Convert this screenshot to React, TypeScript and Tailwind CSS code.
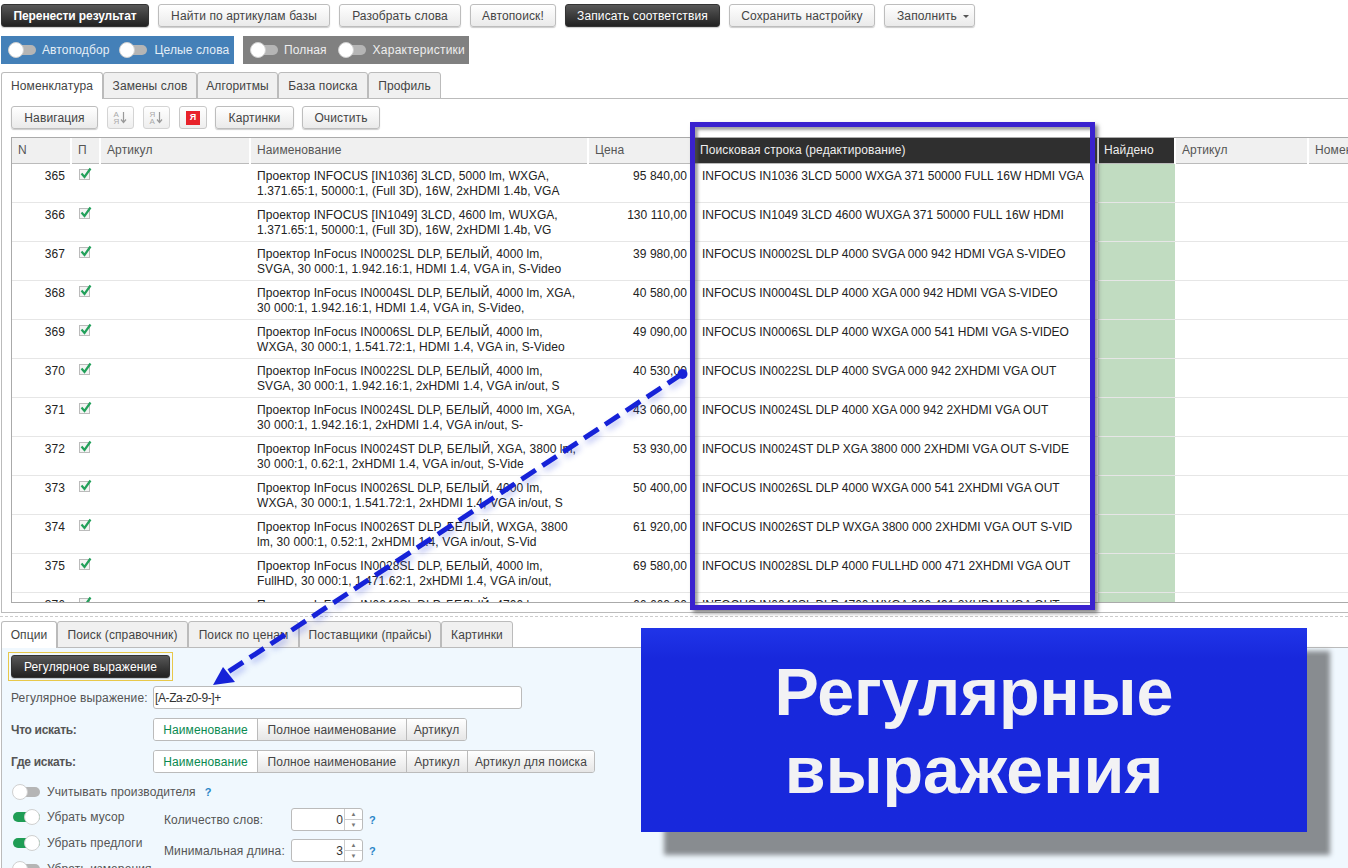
import React from "react";

const F = "[font-family:'Liberation_Sans',Arial,sans-serif]";

type BtnProps = { w: string; dark?: boolean; bold?: boolean; children: React.ReactNode };

function Btn({ w, dark, bold, children }: BtnProps) {
  return (
    <div
      className={
        w +
        " flex h-[23px] shrink-0 items-center justify-center rounded-[3px] border text-[12px] shadow-[0_1px_1px_rgba(0,0,0,0.2)] " +
        (dark
          ? "border-[#333] bg-linear-to-b from-[#585858] to-[#222] text-white "
          : "border-[#bdbdbd] bg-linear-to-b from-white to-[#eaeaea] text-[#444] ") +
        (bold ? "font-bold tracking-[-0.1px]" : "")
      }
    >
      {children}
    </div>
  );
}

function Toggle({ on }: { on?: boolean }) {
  return (
    <div className="relative h-[16px] w-[28px] shrink-0">
      <div className={"absolute left-[1px] top-[3px] h-[10px] w-[27px] rounded-full " + (on ? "bg-[#1f9d55]" : "bg-[#b5b5b5]")} />
      <div
        className={
          "absolute top-0 h-[16px] w-[16px] rounded-full border border-[#d0d0d0] bg-white " + (on ? "right-0" : "left-0")
        }
      />
    </div>
  );
}

function Tab({ w, active, children, h = "h-[27px]" }: { w: string; active?: boolean; h?: string; children: React.ReactNode }) {
  return (
    <div
      className={
        w +
        " " +
        h +
        " flex shrink-0 items-center justify-center rounded-t-[3px] border border-[#bbb] text-[12px] text-[#444] " +
        (active ? "border-b-0 bg-white" : "bg-[#f0f0f0]")
      }
    >
      {children}
    </div>
  );
}

function Sort({ flip }: { flip?: boolean }) {
  return (
    <div className="ml-[1px] flex h-[23px] w-[27px] shrink-0 items-center justify-center gap-[1px] rounded-[3px] border border-[#d4d4d4] bg-linear-to-b from-white to-[#eee]">
      <div className="flex flex-col text-[8px] leading-[7px] tracking-normal text-[#aaa]">
        <span>{flip ? "Я" : "А"}</span>
        <span>{flip ? "А" : "Я"}</span>
      </div>
      <svg width="7" height="13" viewBox="0 0 7 13" fill="none" stroke="#999" strokeWidth="1.2">
        <path d="M3.5 1V11M1 8.5l2.5 3L6 8.5" />
      </svg>
    </div>
  );
}

function Check() {
  return (
    <svg width="14" height="14" viewBox="0 0 14 14" fill="none" className="ml-[7px] mt-[3px]">
      <rect x="1.5" y="2.5" width="10" height="10" fill="#f4f4f4" stroke="#bbb" />
      <path d="M3.5 6.5l3 3.5L12.5 1.5" stroke="#22a05a" strokeWidth="2.2" />
    </svg>
  );
}

const rows: [string, string, string, string, string][] = [
  ["365", "Проектор INFOCUS [IN1036] 3LCD, 5000 lm, WXGA,", "1.371.65:1, 50000:1, (Full 3D), 16W, 2xHDMI 1.4b, VGA", "95 840,00", "INFOCUS IN1036 3LCD 5000 WXGA 371 50000 FULL 16W HDMI VGA"],
  ["366", "Проектор INFOCUS [IN1049] 3LCD, 4600 lm, WUXGA,", "1.371.65:1, 50000:1, (Full 3D), 16W, 2xHDMI 1.4b, VG", "130 110,00", "INFOCUS IN1049 3LCD 4600 WUXGA 371 50000 FULL 16W HDMI"],
  ["367", "Проектор InFocus IN0002SL DLP, БЕЛЫЙ, 4000 lm,", "SVGA, 30 000:1, 1.942.16:1, HDMI 1.4, VGA in, S-Video", "39 980,00", "INFOCUS IN0002SL DLP 4000 SVGA 000 942 HDMI VGA S-VIDEO"],
  ["368", "Проектор InFocus IN0004SL DLP, БЕЛЫЙ, 4000 lm, XGA,", "30 000:1, 1.942.16:1, HDMI 1.4, VGA in, S-Video,", "40 580,00", "INFOCUS IN0004SL DLP 4000 XGA 000 942 HDMI VGA S-VIDEO"],
  ["369", "Проектор InFocus IN0006SL DLP, БЕЛЫЙ, 4000 lm,", "WXGA, 30 000:1, 1.541.72:1, HDMI 1.4, VGA in, S-Video", "49 090,00", "INFOCUS IN0006SL DLP 4000 WXGA 000 541 HDMI VGA S-VIDEO"],
  ["370", "Проектор InFocus IN0022SL DLP, БЕЛЫЙ, 4000 lm,", "SVGA, 30 000:1, 1.942.16:1, 2xHDMI 1.4, VGA in/out, S", "40 530,00", "INFOCUS IN0022SL DLP 4000 SVGA 000 942 2XHDMI VGA OUT"],
  ["371", "Проектор InFocus IN0024SL DLP, БЕЛЫЙ, 4000 lm, XGA,", "30 000:1, 1.942.16:1, 2xHDMI 1.4, VGA in/out, S-", "43 060,00", "INFOCUS IN0024SL DLP 4000 XGA 000 942 2XHDMI VGA OUT"],
  ["372", "Проектор InFocus IN0024ST DLP, БЕЛЫЙ, XGA, 3800 lm,", "30 000:1, 0.62:1, 2xHDMI 1.4, VGA in/out, S-Vide", "53 930,00", "INFOCUS IN0024ST DLP XGA 3800 000 2XHDMI VGA OUT S-VIDE"],
  ["373", "Проектор InFocus IN0026SL DLP, БЕЛЫЙ, 4000 lm,", "WXGA, 30 000:1, 1.541.72:1, 2xHDMI 1.4, VGA in/out, S", "50 400,00", "INFOCUS IN0026SL DLP 4000 WXGA 000 541 2XHDMI VGA OUT"],
  ["374", "Проектор InFocus IN0026ST DLP, БЕЛЫЙ, WXGA, 3800", "lm, 30 000:1, 0.52:1, 2xHDMI 1.4, VGA in/out, S-Vid", "61 920,00", "INFOCUS IN0026ST DLP WXGA 3800 000 2XHDMI VGA OUT S-VID"],
  ["375", "Проектор InFocus IN0028SL DLP, БЕЛЫЙ, 4000 lm,", "FullHD, 30 000:1, 1.471.62:1, 2xHDMI 1.4, VGA in/out,", "69 580,00", "INFOCUS IN0028SL DLP 4000 FULLHD 000 471 2XHDMI VGA OUT"],
  ["376", "Проектор InFocus IN0046SL DLP, БЕЛЫЙ, 4700 lm,", "WXGA, 30 000:1, 1.541.72:1, 2xHDMI 1.4, VGA in/out, S", "66 660,00", "INFOCUS IN0046SL DLP 4700 WXGA 000 491 2XHDMI VGA OUT"],
];

const thBase = "h-[25px] border-r-2 border-r-white bg-[#f0f0f0] pl-[6px] text-left align-middle text-[12px] font-normal whitespace-nowrap text-[#555]";

function Segments({ items }: { items: [string, string][] }) {
  return (
    <div className="flex h-[23px] overflow-hidden rounded-[3px] border border-[#bbb]">
      {items.map(([t, w], i) => (
        <div
          key={t}
          className={
            w +
            " flex items-center justify-center text-[12px] " +
            (i === 0
              ? "bg-white text-[#0a8a50]"
              : "border-l border-[#bbb] bg-linear-to-b from-white to-[#e6e6e6] text-[#444]")
          }
        >
          {t}
        </div>
      ))}
    </div>
  );
}

function Spinner({ value }: { value: string }) {
  return (
    <div className="flex h-[23px] w-[72px] shrink-0 overflow-hidden rounded-[3px] border border-[#bbb] bg-white">
      <div className="flex flex-1 items-center justify-end pr-[1px] text-[12px] text-[#333]">{value}</div>
      <div className="flex w-[18px] flex-col border-l border-[#ccc] text-[#777]">
        <div className="flex flex-1 items-center justify-center border-b border-[#ccc] text-[6px] leading-none">▲</div>
        <div className="flex flex-1 items-center justify-center text-[6px] leading-none">▼</div>
      </div>
    </div>
  );
}

const Q = () => <span className="text-[11px] font-bold text-[#2a86c8]">?</span>;

export default function App() {
  return (
    <div className={F + " relative h-[868px] w-[1348px] overflow-hidden bg-white tracking-[0.12px]"}>
      {/* top toolbar */}
      <div className="flex gap-[9px] pl-[1px] pt-[4px]">
        <Btn w="w-[148px]" dark bold>Перенести результат</Btn>
        <Btn w="w-[172px]">Найти по артикулам базы</Btn>
        <Btn w="w-[122px]">Разобрать слова</Btn>
        <Btn w="w-[86px]">Автопоиск!</Btn>
        <Btn w="w-[155px]" dark>Записать соответствия</Btn>
        <Btn w="w-[146px]">Сохранить настройку</Btn>
        <Btn w="w-[91px]">
          <span className="w-[7px]" />
          Заполнить
          <span className="ml-[6px] mt-[1px] h-0 w-0 border-x-[3px] border-t-[3px] border-x-transparent border-t-[#555]" />
        </Btn>
      </div>

      {/* toggle panels */}
      <div className="mt-[9px] flex gap-[9px] pl-[1px]">
        <div className="flex h-[28px] w-[233px] items-center bg-[#4480b8] pl-[7px] text-[12px] text-[#e4eef6]">
          <Toggle />
          <span className="ml-[6px]">Автоподбор</span>
          <span className="ml-[10px]"><Toggle /></span>
          <span className="ml-[7px]">Целые слова</span>
        </div>
        <div className="flex h-[28px] w-[226px] items-center bg-[#808080] pl-[7px] text-[12px] text-[#eee]">
          <Toggle />
          <span className="ml-[6px]">Полная</span>
          <span className="ml-[11px]"><Toggle /></span>
          <span className="ml-[7px] tracking-[0.25px]">Характеристики</span>
        </div>
      </div>

      {/* main tabs */}
      <div className="relative z-10 mt-[8px] flex pl-[1px]">
        <Tab w="w-[102px]" active>Номенклатура</Tab>
        <Tab w="w-[94px]">Замены слов</Tab>
        <Tab w="w-[81px]">Алгоритмы</Tab>
        <Tab w="w-[90px]">База поиска</Tab>
        <Tab w="w-[73px]">Профиль</Tab>
      </div>

      {/* main panel */}
      <div className="ml-[1px] mt-[-1px] h-[515px] border-b border-l border-t border-[#bbb]">
        <div className="ml-[9px] mt-[7px] flex gap-[8px]">
          <Btn w="w-[87px]">Навигация</Btn>
          <Sort />
          <Sort flip />
          <div className="ml-[1px] flex h-[23px] w-[28px] items-center justify-center rounded-[3px] border border-[#c8c8c8] bg-linear-to-b from-white to-[#eee]">
            <span className="flex h-[14px] w-[14px] items-center justify-center bg-[#e8222a] text-[9px] font-bold text-white">Я</span>
          </div>
          <Btn w="w-[79px]">Картинки</Btn>
          <Btn w="w-[78px]">Очистить</Btn>
        </div>

        <div className="ml-[9px] mt-[8px] h-[466px] overflow-hidden border-y border-l border-[#aaa]">
          <table className="w-[1500px] table-fixed border-collapse">
            <colgroup>
              <col className="w-[59px]" />
              <col className="w-[29px]" />
              <col className="w-[150px]" />
              <col className="w-[338px]" />
              <col className="w-[106px]" />
              <col className="w-[404px]" />
              <col className="w-[77px]" />
              <col className="w-[133px]" />
              <col className="w-[204px]" />
            </colgroup>
            <thead>
              <tr className="border-b border-[#bbb]">
                <th className={thBase}>N</th>
                <th className={thBase}>П</th>
                <th className={thBase}>Артикул</th>
                <th className={thBase}>Наименование</th>
                <th className={thBase}>Цена</th>
                <th className="h-[25px] border-r-2 border-white bg-[#2f2f2f] pl-[5px] text-left text-[12px] font-normal text-[#eee]">Поисковая строка (редактирование)</th>
                <th className="h-[25px] border-r-2 border-white bg-[#2f2f2f] pl-[5px] text-left text-[12px] font-normal text-[#eee]">Найдено</th>
                <th className={thBase}>Артикул</th>
                <th className={thBase}>Номенклатура</th>
              </tr>
            </thead>
            <tbody>
              {rows.map((r) => (
                <tr key={r[0]} className="h-[39px] border-b border-[#e6e6e6] align-top text-[12px] leading-[15px] tracking-[0.07px] text-[#222]">
                  <td className="pr-[6px] pt-[5px] text-right">{r[0]}</td>
                  <td><Check /></td>
                  <td />
                  <td className="pl-[7px] pt-[5px] whitespace-nowrap">{r[1]}<br />{r[2]}</td>
                  <td className="pr-[7px] pt-[5px] text-right">{r[3]}</td>
                  <td className="pl-[8px] pt-[5px] tracking-[-0.01px] whitespace-nowrap">{r[4]}</td>
                  <td className="bg-[#c1dcc1]" />
                  <td />
                  <td />
                </tr>
              ))}
            </tbody>
          </table>
        </div>
      </div>

      {/* splitter */}
      <div className="mt-[3px] border-t border-dashed border-[#ccc]" />

      {/* bottom tabs */}
      <div className="relative z-10 mt-[4px] flex pl-[1px]">
        <Tab w="w-[56px]" active>Опции</Tab>
        <Tab w="w-[131px]">Поиск (справочник)</Tab>
        <Tab w="w-[111px]">Поиск по ценам</Tab>
        <Tab w="w-[142px]">Поставщики (прайсы)</Tab>
        <Tab w="w-[72px]">Картинки</Tab>
      </div>

      {/* bottom panel */}
      <div className="ml-[1px] mt-[-1px] h-[221px] border-l border-t border-[#bbb] bg-[#f0f8fe] pl-[6px] pt-[4px] text-[12px] text-[#555]">
        <div className="w-[165px] border border-[#e8c84a] p-[2px]">
          <Btn w="w-[159px]" dark>Регулярное выражение</Btn>
        </div>
        <div className="mt-[5px] flex items-center pl-[3px]">
          <span className="w-[142px]">Регулярное выражение:</span>
          <div className="flex h-[23px] w-[369px] items-center rounded-[3px] border border-[#bbb] bg-white pl-[1px] tracking-[-0.4px] text-[#333]">[A-Za-z0-9-]+</div>
        </div>
        <div className="mt-[9px] flex items-center pl-[3px]">
          <span className="w-[142px] font-bold tracking-[-0.3px]">Что искать:</span>
          <Segments items={[["Наименование", "w-[103px]"], ["Полное наименование", "w-[149px]"], ["Артикул", "w-[60px]"]]} />
        </div>
        <div className="mt-[9px] flex items-center pl-[3px]">
          <span className="w-[142px] font-bold tracking-[-0.3px]">Где искать:</span>
          <Segments
            items={[
              ["Наименование", "w-[103px]"],
              ["Полное наименование", "w-[149px]"],
              ["Артикул", "w-[61px]"],
              ["Артикул для поиска", "w-[127px]"],
            ]}
          />
        </div>
        <div className="mt-[10px] flex items-center pl-[4px]">
          <Toggle />
          <span className="ml-[7px]">Учитывать производителя</span>
          <span className="ml-[9px]"><Q /></span>
        </div>
        <div className="mt-[7px] flex pl-[4px]">
          <div className="flex w-[152px] flex-col gap-[8px]">
            <div className="flex items-center"><Toggle on /><span className="ml-[7px]">Убрать мусор</span></div>
            <div className="flex items-center"><Toggle on /><span className="ml-[7px]">Убрать предлоги</span></div>
            <div className="flex items-center"><Toggle /><span className="ml-[7px]">Убрать измерения</span></div>
          </div>
          <div className="flex flex-col gap-[8px]">
            <div className="flex items-center">
              <span className="w-[127px] pt-[1px]">Количество слов:</span>
              <Spinner value="0" />
              <span className="ml-[6px]"><Q /></span>
            </div>
            <div className="flex items-center">
              <span className="w-[127px] pt-[1px]">Минимальная длина:</span>
              <Spinner value="3" />
              <span className="ml-[6px]"><Q /></span>
            </div>
          </div>
        </div>
      </div>

      {/* highlight frame over the table */}
      <div className="pointer-events-none absolute left-[690px] top-[122px] z-20 h-[488px] w-[405px] border-[5px] border-[#3a22cf] shadow-[3px_3px_4px_rgba(60,60,60,0.6),inset_3px_3px_3px_rgba(90,90,90,0.55)]" />

      {/* arrow */}
      <svg className="pointer-events-none absolute left-0 top-0 z-20" width="1348" height="868" viewBox="0 0 1348 868" fill="none">
        <defs>
          <filter id="soft" x="-20%" y="-20%" width="140%" height="140%">
            <feGaussianBlur stdDeviation="3" />
          </filter>
        </defs>
        <g opacity="0.35" transform="translate(2 4)" filter="url(#soft)">
          <path d="M682 374L228 672" stroke="#3a50e0" strokeWidth="5" strokeDasharray="17 8" />
        </g>
        <path d="M682 374L228 672" stroke="#1622d8" strokeWidth="5" strokeDasharray="17 8" />
        <circle cx="682.5" cy="374" r="5" fill="#1622d8" />
        <path d="M213 685L223 667L235 682Z" fill="#1622d8" />
      </svg>

      {/* banner */}
      <div className="absolute left-[641px] top-[628px] z-30 flex h-[204px] w-[666px] flex-col items-center justify-center bg-linear-to-b from-[#2034e8] from-0% to-[#1828dc] to-15% pt-[1px] text-[66.5px] font-bold leading-[78px] tracking-normal text-[#f2f2f4] shadow-[23px_23px_5px_#888c90]">
        <span>Регулярные</span>
        <span>выражения</span>
      </div>
    </div>
  );
}
